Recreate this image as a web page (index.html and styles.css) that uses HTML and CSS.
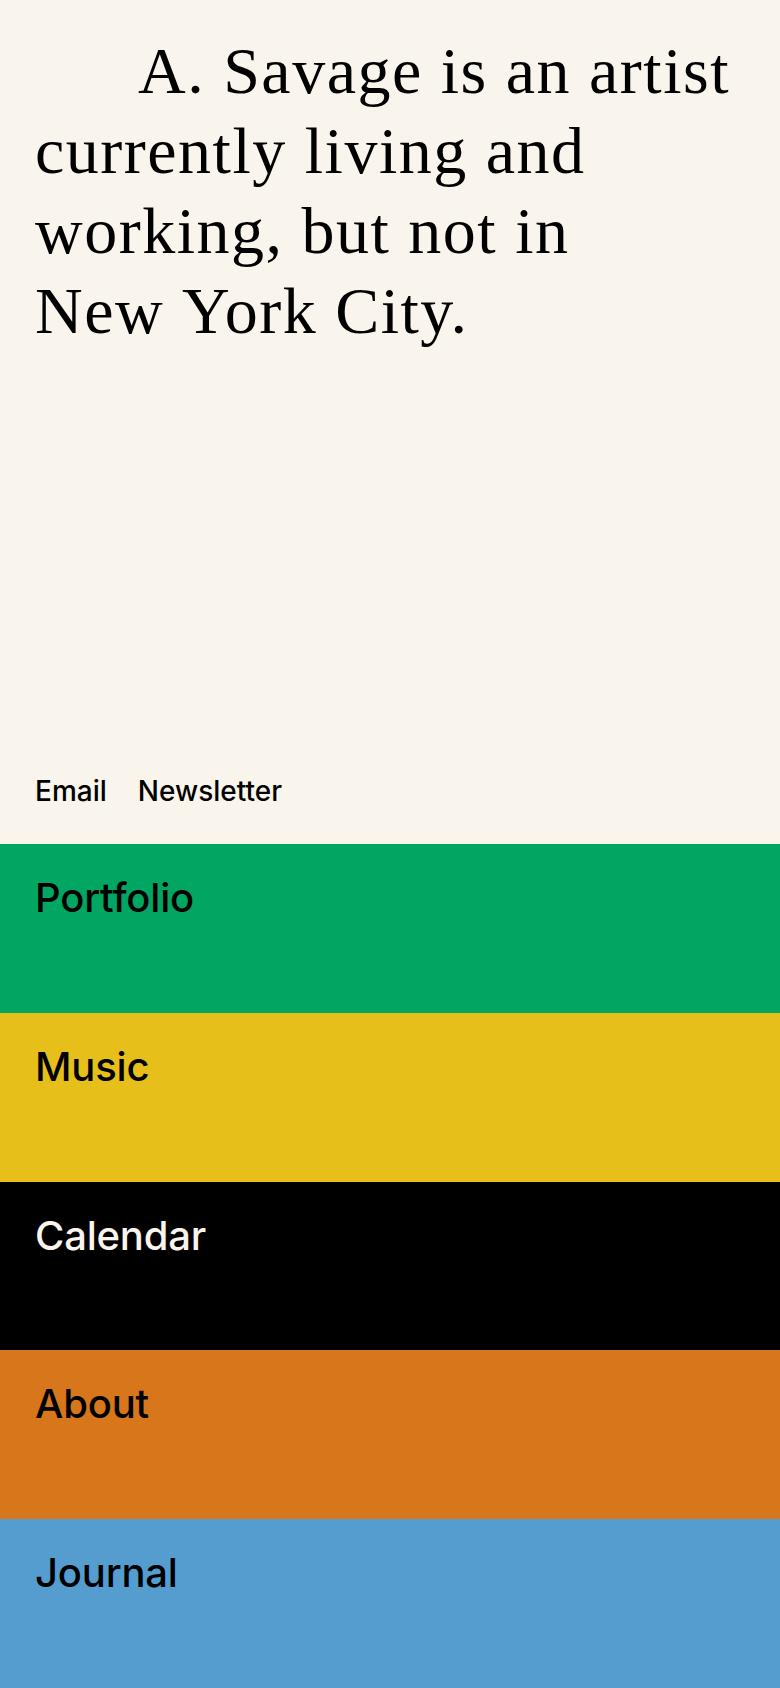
FILE: index.html
```html
<!DOCTYPE html>
<html lang="en">
<head>
<meta charset="utf-8">
<title>A. Savage</title>
<link rel="stylesheet" href="styles.css">
</head>
<body>
<header class="intro">
  <h1 class="intro__text">A. Savage is an artist currently living and working, but not in New&nbsp;York City.</h1>
  <nav class="contact">
    <a href="#" class="contact__link">Email</a>
    <a href="#" class="contact__link">Newsletter</a>
  </nav>
</header>
<nav class="sections">
  <a href="#" class="band band--green">Portfolio</a>
  <a href="#" class="band band--yellow">Music</a>
  <a href="#" class="band band--black">Calendar</a>
  <a href="#" class="band band--orange">About</a>
  <a href="#" class="band band--blue">Journal</a>
</nav>
</body>
</html>
```
FILE: styles.css
```css
html, body {
  margin: 0;
  padding: 0;
}
body {
  background: #faf5ec;
  color: #000;
  font-family: "Inter", "Liberation Sans", sans-serif;
}
a {
  color: inherit;
  text-decoration: none;
}
.intro {
  height: 50vh;
  box-sizing: border-box;
  padding: 31px 35px 35px;
  display: flex;
  flex-direction: column;
  justify-content: space-between;
}
.intro__text {
  margin: 0;
  font-family: "Liberation Serif", "Times New Roman", serif;
  font-weight: 400;
  font-size: 66px;
  line-height: 80px;
  text-indent: 103px;
  letter-spacing: 1.5px;
}
.contact {
  display: flex;
  gap: 31px;
  font-size: 28px;
  font-weight: 500;
  line-height: 1.2;
  letter-spacing: 0;
}
.sections {
  display: flex;
  flex-direction: column;
}
.band {
  height: 10vh;
  box-sizing: border-box;
  padding: 30px 35px 0;
  font-size: 40px;
  font-weight: 500;
  line-height: 1.2;
  letter-spacing: -0.2px;
}
.band--green { background: #00a661; }
.band--yellow { background: #e6bf1b; }
.band--black { background: #000; color: #faf5ec; }
.band--orange { background: #d7761a; }
.band--blue { background: #549dce; }
```
